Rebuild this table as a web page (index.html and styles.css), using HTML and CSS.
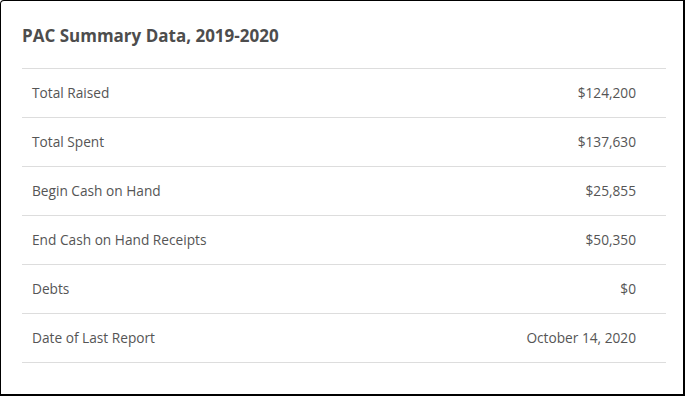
FILE: index.html
```html
<!DOCTYPE html>
<html>
<head>
<meta charset="utf-8">
<link rel="stylesheet" href="styles.css">
</head>
<body>
<section class="card">
  <h2 class="title">PAC Summary Data, 2019-2020</h2>
  <div class="rows">
    <div class="row"><span class="label">Total Raised</span><span class="value">$124,200</span></div>
    <div class="row"><span class="label">Total Spent</span><span class="value">$137,630</span></div>
    <div class="row"><span class="label">Begin Cash on Hand</span><span class="value">$25,855</span></div>
    <div class="row"><span class="label">End Cash on Hand Receipts</span><span class="value">$50,350</span></div>
    <div class="row"><span class="label">Debts</span><span class="value">$0</span></div>
    <div class="row"><span class="label">Date of Last Report</span><span class="value">October 14, 2020</span></div>
  </div>
</section>
</body>
</html>
```

FILE: styles.css
```css
html, body {
  margin: 0;
  padding: 0;
  background: #fff;
}

.card {
  box-sizing: border-box;
  width: 685px;
  height: 396px;
  border: 1px solid #000;
  border-right-width: 2px;
  border-bottom-width: 2px;
  border-top-left-radius: 4px;
  padding: 23px 17px 0 21px;
  font-family: "Open Sans", "Liberation Sans", sans-serif;
  color: #555;
}

.title {
  margin: 0 0 21px 0;
  font-size: 17px;
  line-height: 23px;
  font-weight: 700;
  color: #4d4d4d;
}

.rows {
  display: flex;
  flex-direction: column;
}

.row {
  display: flex;
  justify-content: space-between;
  align-items: center;
  height: 48px;
  padding: 0 30px 0 10px;
  border-top: 1px solid #dddddd;
  font-size: 13.7px;
  line-height: 20px;
}

.row:last-child {
  border-bottom: 1px solid #dddddd;
}
```
